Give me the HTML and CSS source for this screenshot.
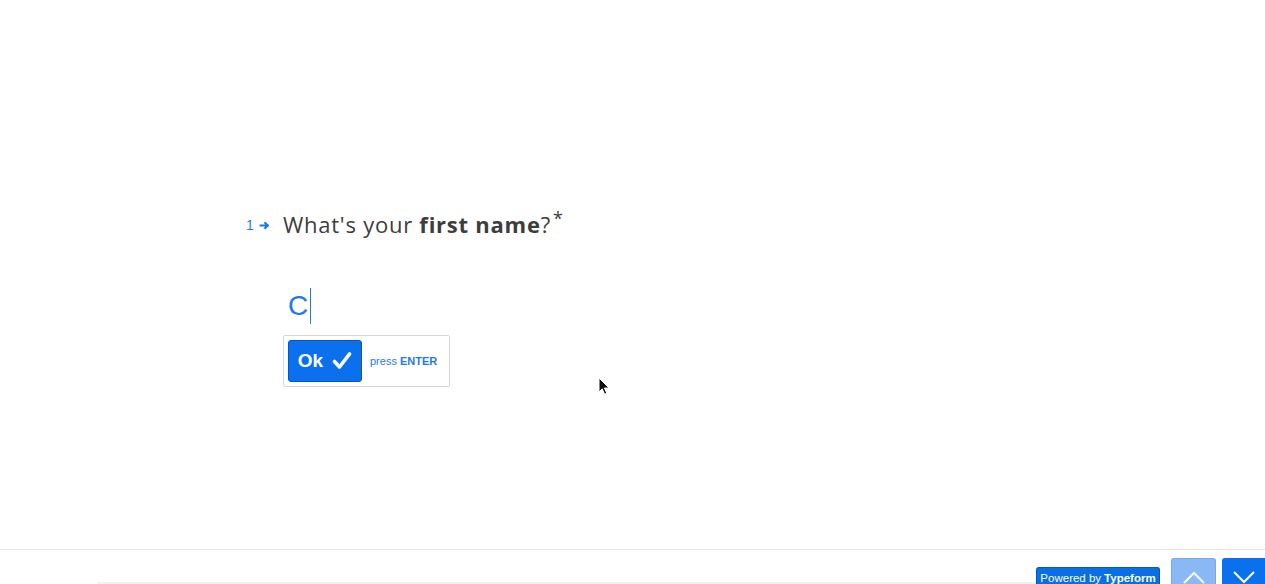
FILE: index.html
```html
<!DOCTYPE html>
<html lang="en">
<head>
    <meta charset="UTF-8">
    <title>Typeform</title>
    <link rel="stylesheet" href="styles.css">
</head>
<body>
<main class="form-area">
    <section class="question">
        <div class="question-head">
            <span class="q-number">1<svg class="q-arrow" width="11" height="9" viewBox="0 0 11 9"><path d="M0.5 4.5h8.5M5.5 1.2l3.3 3.3-3.3 3.3" fill="none" stroke="currentColor" stroke-width="2.2"/></svg></span>
            <h1 class="q-title">What's your <b>first name</b>?<sup>*</sup></h1>
        </div>
        <div class="answer">
            <span class="answer-text">C</span><span class="caret"></span>
        </div>
        <div class="ok-box">
            <button class="ok-btn" type="button">Ok
                <svg width="20" height="18" viewBox="0 0 20 18"><path d="M2.5 9.5l5 5.5L17.5 2" fill="none" stroke="#fff" stroke-width="3.6" stroke-linecap="round" stroke-linejoin="round"/></svg>
            </button>
            <span class="hint">press <b>ENTER</b></span>
        </div>
    </section>
    <!-- mouse pointer from the capture -->
    <svg class="pointer" width="13" height="19" viewBox="0 0 13 19"><path d="M1 1v14l3.2-3.2 2.4 5.4 2.2-1-2.4-5.2H11z" fill="#111" stroke="#fff" stroke-width="1"/></svg>
</main>
<footer class="footer">
    <div class="progress"></div>
    <a class="powered" href="#">Powered by <b>Typeform</b></a>
    <button class="nav-btn nav-up" type="button">
        <svg width="22" height="14" viewBox="0 0 22 14"><path d="M1 12L11 2l10 10" fill="none" stroke="#fff" stroke-width="2"/></svg>
    </button>
    <button class="nav-btn nav-down" type="button">
        <svg width="22" height="14" viewBox="0 0 22 14"><path d="M1 2l10 10 10-10" fill="none" stroke="#fff" stroke-width="2"/></svg>
    </button>
</footer>
</body>
</html>
```

FILE: styles.css
```css
/* Reset */
* {
    box-sizing: border-box;
    margin: 0;
    padding: 0;
}

html, body {
    height: 100%;
    overflow: hidden;
}

body {
    font-family: "Liberation Sans", Arial, sans-serif;
    background: #fff;
    color: #3d3d3d;
}

/* Question area */
.form-area {
    position: relative;
    height: 549px;
    padding: 209px 0 0 246px;
}

.question-head {
    display: flex;
    align-items: center;
    height: 30px;
}

.q-number {
    display: flex;
    align-items: center;
    gap: 5px;
    width: 37px;
    font-size: 14px;
    color: #1f7ae8;
    padding-top: 2px;
}

.q-title {
    font-family: "Open Sans", sans-serif;
    font-weight: 400;
    font-size: 22px;
    letter-spacing: 0.75px;
    line-height: 30px;
    margin-bottom: 6px;
    color: #3d3d3d;
}

.q-title b {
    font-weight: 700;
}

.q-title sup {
    font-size: 18px;
    vertical-align: 8px;
    margin-left: 2px;
}

/* Typed answer */
.answer {
    display: flex;
    align-items: center;
    height: 40px;
    margin: 47px 0 9px 42px;
}

.answer-text {
    font-size: 28px;
    line-height: 40px;
    color: #1f7ae8;
}

.caret {
    width: 1px;
    height: 36px;
    background: #1f7ae8;
    margin-left: 2px;
}

/* Ok button */
.ok-box {
    display: inline-flex;
    align-items: center;
    margin-left: 37px;
    padding: 4px 12px 4px 4px;
    border: 1px solid #d6d6d6;
    border-radius: 2px;
    background: #fff;
}

.ok-btn {
    display: flex;
    align-items: center;
    justify-content: center;
    gap: 9px;
    width: 74px;
    height: 42px;
    background: #0a70ee;
    border: 1px solid #0b56b5;
    border-radius: 3px;
    color: #fff;
    font-family: "Liberation Sans", Arial, sans-serif;
    font-weight: 700;
    font-size: 19px;
    cursor: pointer;
}

.hint {
    margin-left: 8px;
    font-size: 11px;
    color: #1f7ae8;
}

.pointer {
    position: absolute;
    left: 598px;
    top: 377px;
}

/* Footer */
.footer {
    display: flex;
    align-items: flex-end;
    height: 35px;
    border-top: 1px solid #e4e4e4;
}

.progress {
    flex: 1;
    height: 2px;
    margin-left: 97px;
    background: #f1f1f1;
}

.powered {
    display: flex;
    align-items: center;
    justify-content: center;
    width: 124px;
    height: 17px;
    padding-top: 4px;
    background: #0a6fe6;
    border: 1px solid #0b56b5;
    border-bottom: none;
    border-radius: 3px 3px 0 0;
    color: #fff;
    font-size: 11.5px;
    text-decoration: none;
    gap: 3px;
}

.nav-btn {
    display: flex;
    justify-content: center;
    padding-top: 12px;
    width: 45px;
    height: 26px;
    border: none;
    border-radius: 3px 3px 0 0;
    cursor: pointer;
}

.nav-up {
    margin-left: 11px;
    background: #89b8f4;
    border: 1px solid #7aa9e6;
    border-bottom: none;
}

.nav-down {
    margin-left: 6px;
    width: 43px;
    background: #0a70ee;
    border-radius: 3px 0 0 0;
}
```
